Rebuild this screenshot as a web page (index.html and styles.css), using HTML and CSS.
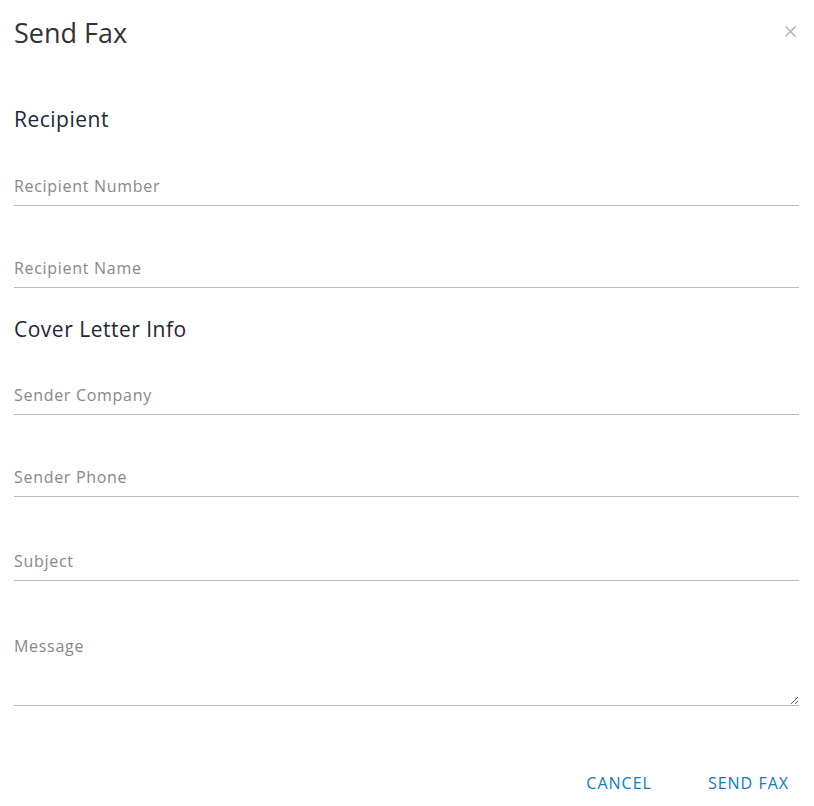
FILE: index.html
```html
<!DOCTYPE html>
<html>
<head>
    <meta charset="utf-8">
    <title>Send Fax</title>
    <link rel="stylesheet" href="styles.css">
</head>
<body>
    <div class="dialog">
        <div class="dialog-header">
            <h1 class="dialog-title">Send Fax</h1>
            <button class="close-btn" aria-label="Close">
                <svg width="11" height="11" viewBox="0 0 11 11">
                    <path d="M0.5 0.5 L10.5 10.5 M10.5 0.5 L0.5 10.5" stroke="#aaa" stroke-width="1.2"/>
                </svg>
            </button>
        </div>
        <form class="fax-form">
            <h2 class="section-title first">Recipient</h2>
            <div class="field"><input type="text" placeholder="Recipient Number"></div>
            <div class="field"><input type="text" placeholder="Recipient Name"></div>
            <h2 class="section-title">Cover Letter Info</h2>
            <div class="field"><input type="text" placeholder="Sender Company"></div>
            <div class="field"><input type="text" placeholder="Sender Phone"></div>
            <div class="field wide"><input type="text" placeholder="Subject"></div>
            <div class="field"><textarea placeholder="Message"></textarea></div>
            <div class="actions">
                <button type="button" class="text-btn">Cancel</button>
                <button type="button" class="text-btn">Send Fax</button>
            </div>
        </form>
    </div>
</body>
</html>
```

FILE: styles.css
```css
body {
    margin: 0;
    background: #fff;
    font-family: "Open Sans", "Liberation Sans", sans-serif;
}
.dialog {
    padding: 0 15px 0 14px;
}
.dialog-header {
    display: flex;
    justify-content: space-between;
    align-items: center;
    height: 64px;
}
.dialog-title {
    margin: 0;
    font-size: 27px;
    font-weight: 400;
    color: #333;
}
.close-btn {
    border: none;
    background: none;
    padding: 0;
    margin-right: 3px;
    cursor: pointer;
}
.section-title {
    margin: 27px 0 0;
    font-size: 21px;
    font-weight: 400;
    letter-spacing: 0.5px;
    color: #1f2637;
    line-height: 28px;
}
.section-title.first {
    margin-top: 41px;
}
.field {
    margin-top: 42px;
}
.section-title + .field {
    margin-top: 33px;
}
.section-title:not(.first) + .field {
    margin-top: 32px;
}
.field.wide {
    margin-top: 44px;
}
.field input,
.field textarea {
    display: block;
    width: 100%;
    box-sizing: border-box;
    border: none;
    border-bottom: 1px solid #bbb;
    padding: 0;
    font-family: inherit;
    font-size: 16px;
    letter-spacing: 0.7px;
    color: #333;
    outline: none;
    background: transparent;
}
.field input {
    height: 40px;
}
.field textarea {
    height: 83px;
    padding-top: 12px;
    resize: vertical;
}
.field input::placeholder,
.field textarea::placeholder {
    color: #888;
}
.actions {
    display: flex;
    justify-content: flex-end;
    gap: 36px;
    margin-top: 60px;
    padding-bottom: 10px;
}
.text-btn {
    border: none;
    background: none;
    padding: 6px 10px;
    font-family: inherit;
    font-size: 16px;
    letter-spacing: 1px;
    text-transform: uppercase;
    color: #0a7cc2;
    cursor: pointer;
}
```
